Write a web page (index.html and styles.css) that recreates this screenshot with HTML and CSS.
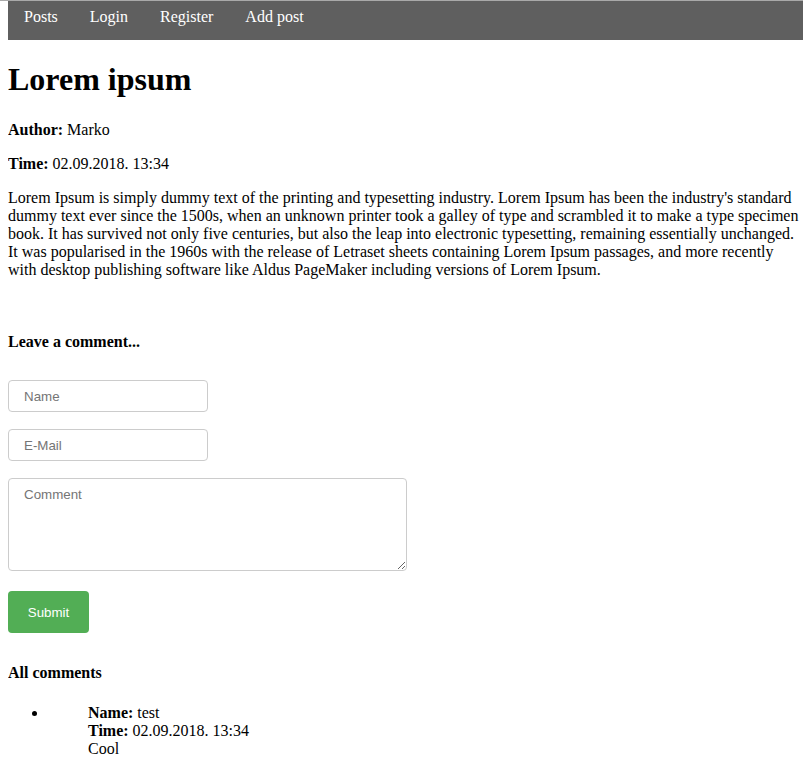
FILE: index.html
```html
<!DOCTYPE html>
<html lang="en">
<head>
<meta charset="utf-8">
<title>Lorem ipsum</title>
<link rel="stylesheet" href="styles.css">
</head>
<body>
<nav class="topnav">
  <ul class="topnav-list">
    <li><a href="#">Posts</a></li>
    <li><a href="#">Login</a></li>
    <li><a href="#">Register</a></li>
    <li><a href="#">Add post</a></li>
  </ul>
</nav>
<main class="post">
  <h1 class="post-title">Lorem ipsum</h1>
  <p class="meta"><b>Author:</b> Marko</p>
  <p class="meta"><b>Time:</b> 02.09.2018. 13:34</p>
  <p class="post-body">Lorem Ipsum is simply dummy text of the printing and typesetting industry. Lorem Ipsum has been the industry's standard dummy text ever since the 1500s, when an unknown printer took a galley of type and scrambled it to make a type specimen book. It has survived not only five centuries, but also the leap into electronic typesetting, remaining essentially unchanged. It was popularised in the 1960s with the release of Letraset sheets containing Lorem Ipsum passages, and more recently with desktop publishing software like Aldus PageMaker including versions of Lorem Ipsum.</p>

  <h4 class="section-title leave">Leave a comment...</h4>
  <form class="comment-form">
    <input class="field field-short" type="text" placeholder="Name">
    <input class="field field-short" type="text" placeholder="E-Mail">
    <textarea class="field field-area" placeholder="Comment"></textarea>
    <button class="submit" type="button">Submit</button>
  </form>

  <h4 class="section-title all">All comments</h4>
  <ul class="comments">
    <li class="comment">
      <b>Name:</b> test<br>
      <b>Time:</b> 02.09.2018. 13:34<br>
      Cool
    </li>
  </ul>
</main>
</body>
</html>
```
FILE: styles.css
```css
html {
  border-top: 1px solid #a9a9a9;
}
body {
  margin: 0 0 0 8px;
  font-family: "Liberation Serif", "Times New Roman", serif;
  font-size: 16px;
  color: #000;
  background: #fff;
}
.topnav {
  background: #5f5f5f;
}
.topnav-list {
  list-style: none;
  margin: 0;
  padding: 0;
  display: flex;
}
.topnav-list a {
  display: block;
  color: #fff;
  text-decoration: none;
  padding: 7px 16px 14px;
  line-height: 18px;
}
.post-title {
  font-size: 32px;
  margin: 21px 0 23px;
  line-height: 37px;
}
.meta {
  margin: 15px 0 16px;
}
.post-body {
  margin: 16px 0;
}
.section-title {
  font-size: 16px;
  margin: 21px 0;
}
.section-title.leave {
  margin-top: 54px;
  margin-bottom: 29px;
}
.section-title.all {
  margin-top: 31px;
  margin-bottom: 22px;
}
.comment-form {
  display: flex;
  flex-direction: column;
  align-items: flex-start;
}
.field {
  box-sizing: border-box;
  font-family: "Liberation Sans", Arial, sans-serif;
  font-size: 13.33px;
  border: 1px solid #cccccc;
  border-radius: 4px;
  padding: 0 15px;
  margin: 0 0 17px;
  color: #333;
}
.field::placeholder {
  color: #757575;
}
.field-short {
  width: 200px;
  height: 32px;
}
.field-area {
  width: 399px;
  height: 93px;
  padding-top: 8px;
  margin-bottom: 20px;
  resize: vertical;
}
.submit {
  background: #52ae55;
  color: #fff;
  border: none;
  border-radius: 4px;
  font-family: "Liberation Sans", Arial, sans-serif;
  font-size: 13.33px;
  width: 81px;
  height: 42px;
  padding: 0;
  margin: 0;
}
.comments {
  margin: 0;
  padding-left: 40px;
}
.comment {
  padding-left: 40px;
  line-height: 18px;
}
```
